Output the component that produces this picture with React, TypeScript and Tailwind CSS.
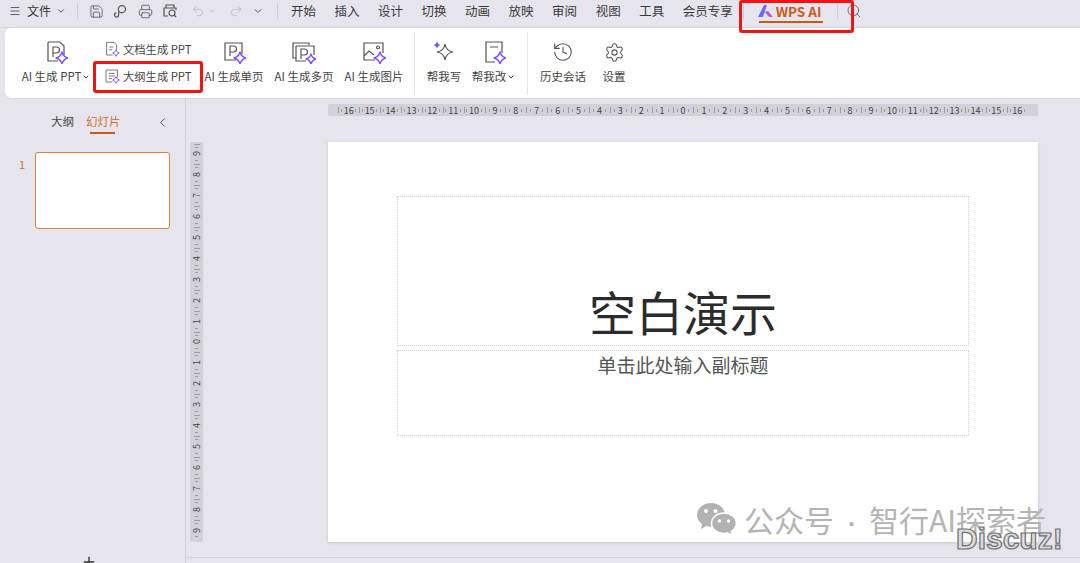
import { ChevronDown, ChevronLeft, History, Menu, Plus, Printer, Redo2, Save, Search, Settings, Undo2 } from "lucide-react";

const menus = ["开始", "插入", "设计", "切换", "动画", "放映", "审阅", "视图", "工具", "会员专享"];
const rulerNums = [16, 15, 14, 13, 12, 11, 10, 9, 8, 7, 6, 5, 4, 3, 2, 1, 0, 1, 2, 3, 4, 5, 6, 7, 8, 9, 10, 11, 12, 13, 14, 15, 16];
const sideNums = [9, 8, 7, 6, 5, 4, 3, 2, 1, 0, 1, 2, 3, 4, 5, 6, 7, 8, 9];

function Spark({ x, y, s = 6 }: { x: number; y: number; s?: number }) {
  return (
    <path
      d={`M${x} ${y - s}Q${x + s * 0.2} ${y - s * 0.2} ${x + s} ${y}Q${x + s * 0.2} ${y + s * 0.2} ${x} ${y + s}Q${x - s * 0.2} ${y + s * 0.2} ${x - s} ${y}Q${x - s * 0.2} ${y - s * 0.2} ${x} ${y - s}Z`}
      fill="#fff"
      stroke="#7c4dff"
      strokeWidth="1.3"
      strokeLinejoin="round"
    />
  );
}

function PLetter({ x = 7, y = 6 }: { x?: number; y?: number }) {
  return <path d={`M${x} ${y + 10}V${y}h3.500a3 3 0 0 1 0 6h-3.500`} fill="none" stroke="#555" strokeWidth="1.2" />;
}

function IconBox({ children, size = 24 }: { children: React.ReactNode; size?: number }) {
  return (
    <svg width={size} height={size} viewBox="0 0 24 24" fill="none" stroke="#555" strokeWidth="1.2">
      {children}
    </svg>
  );
}

function RibbonButton({ icon, label, width, caret }: { icon: React.ReactNode; label: string; width: string; caret?: boolean }) {
  return (
    <div className={`flex flex-col items-center shrink-0 ${width}`}>
      <div className="h-[24px] flex items-center justify-center">{icon}</div>
      <div className="mt-[5px] h-[16px] flex items-center whitespace-nowrap text-[11.5px] text-[#444]">
        {label}
        {caret && <ChevronDown size={8} strokeWidth={3} className="ml-[1px]" />}
      </div>
    </div>
  );
}

function Ruler() {
  return (
    <div className="ml-[142px] w-[710px] h-[12px] bg-[#d2d1d9] rounded-[2px] flex items-center justify-center">
      {rulerNums.map((n, i) => (
        <div key={i} className="w-[20.9px] shrink-0 flex items-center justify-between text-[9px] leading-none text-[#444]">
          <span className="w-px h-[6px] bg-[#9c9ca3]" />
          <span className="w-px h-[3px] bg-[#9c9ca3]" />
          <span>{n}</span>
          <span className="w-px h-[3px] bg-[#9c9ca3]" />
          <span className="w-px" />
        </div>
      ))}
    </div>
  );
}

function SideRuler() {
  return (
    <div className="ml-[4px] w-[13px] h-[400px] bg-[#d2d1d9] rounded-[2px] flex flex-col items-center justify-center">
      {sideNums.map((n, i) => (
        <div key={i} className="h-[20.9px] shrink-0 flex flex-col items-center justify-between text-[9px] leading-none text-[#444]">
          <span className="h-px w-[6px] bg-[#9c9ca3]" />
          <span className="h-px w-[3px] bg-[#9c9ca3]" />
          <span className="-rotate-90">{n}</span>
          <span className="h-px w-[3px] bg-[#9c9ca3]" />
          <span className="h-px" />
        </div>
      ))}
    </div>
  );
}

export default function App() {
  return (
    <div className="relative w-[1080px] h-[563px] overflow-hidden bg-[#e6e5ee] font-['Noto_Sans_CJK_SC','Noto_Sans',sans-serif] text-[#333]">
      {/* top menu */}
      <div className="h-[28px] pb-[5px] flex items-center border-b border-[#d6d5dd]">
        <Menu size={12} strokeWidth={1.5} className="ml-[9px]" />
        <span className="ml-[6px] text-[12px]">文件</span>
        <ChevronDown size={10} className="ml-[5px]" />
        <span className="ml-[11px] w-px h-[16px] bg-[#cfced6]" />
        <Save size={15} strokeWidth={1.3} className="ml-[11px] text-[#555]" />
        <svg width="15" height="15" viewBox="0 0 16 16" fill="none" stroke="#555" strokeWidth="1.3" className="ml-[9px]">
          <circle cx="9.5" cy="5.5" r="3.8" />
          <path d="M6 8v3.5a2.2 2.2 0 1 1-2.5-2" />
        </svg>
        <Printer size={15} strokeWidth={1.3} className="ml-[10px] text-[#555]" />
        <svg width="16" height="16" viewBox="0 0 16 16" fill="none" stroke="#555" strokeWidth="1.2" className="ml-[9px]">
          <path d="M4 5V2h8v3M6 13H2V5h12v2" />
          <circle cx="10" cy="10" r="3" />
          <path d="M12.2 12.2l2 2" />
        </svg>
        <Undo2 size={14} strokeWidth={1.3} className="ml-[13px] text-[#b5b5bb]" />
        <ChevronDown size={8} className="ml-[3px] text-[#b5b5bb]" />
        <Redo2 size={14} strokeWidth={1.3} className="ml-[13px] text-[#b5b5bb]" />
        <ChevronDown size={12} className="ml-[9px] text-[#555]" />
        <span className="ml-[13px] w-px h-[16px] bg-[#cfced6]" />
        <div className="ml-[13px] flex gap-[18.5px] text-[12.5px] text-[#3a3a3a]">
          {menus.map((m) => (
            <span key={m}>{m}</span>
          ))}
        </div>
        <span className="ml-[10px] w-px h-[16px] bg-[#cfced6]" />
        <div className="relative ml-[14px] w-[65px] flex items-center gap-[3px]">
          <svg width="15" height="12" viewBox="0 0 15 12" className="shrink-0">
            <defs>
              <linearGradient id="wps" x1="0" x2="1" y1="0" y2="0">
                <stop offset="0" stopColor="#4a7bff" />
                <stop offset="0.55" stopColor="#8a5cf6" />
                <stop offset="1" stopColor="#ff5c9a" />
              </linearGradient>
            </defs>
            <path d="M0 12 6 0h3L5 12zM7 7l3-1 5 6h-4z" fill="url(#wps)" />
          </svg>
          <span className="text-[13.5px] font-bold text-[#c85a1a] whitespace-nowrap">WPS AI</span>
          <span className="absolute left-[1px] right-0 top-[20px] h-[2px] bg-[#c85a1a]" />
        </div>
        <span className="ml-[14px] w-px h-[16px] bg-[#cfced6]" />
        <Search size={16} strokeWidth={1.2} className="ml-[8px] text-[#555]" />
      </div>

      {/* ribbon */}
      <div className="ml-[5px] h-[70px] bg-white rounded-l-[6px] flex items-start pt-[12px] shadow-[0_1px_1px_#d6d5dd]">
        <RibbonButton
          label="AI 生成 PPT"
          width="w-[78px] ml-[12px]"
          caret
          icon={
            <IconBox>
              <path d="M4 2h12l4 4v9M4 2v19h10" />
              <PLetter x={9} y={7} />
              <Spark x={18} y={18} />
            </IconBox>
          }
        />
        <div className="ml-[9px] -mt-[1px] w-[100px] shrink-0 flex flex-col text-[11.3px] text-[#444]">
          <div className="h-[20px] flex items-center gap-[3px] whitespace-nowrap">
            <IconBox size={16}>
              <path d="M4 2h11l4 4v7M4 2v19h9M8 9h6M8 13h4" />
              <Spark x={18} y={18} s={5} />
            </IconBox>
            文档生成 PPT
          </div>
          <div className="mt-[7px] h-[20px] flex items-center gap-[3px] whitespace-nowrap">
            <IconBox size={16}>
              <path d="M3 3h17v11M3 3v18h10M7 8h9M7 12h9M7 16h5" />
              <Spark x={18} y={18} s={5} />
            </IconBox>
            大纲生成 PPT
          </div>
        </div>
        <RibbonButton
          label="AI 生成单页"
          width="w-[60px]"
          icon={
            <IconBox>
              <path d="M20 14V3H3v17h11" />
              <PLetter x={8} y={6} />
              <Spark x={18} y={18} />
            </IconBox>
          }
        />
        <RibbonButton
          label="AI 生成多页"
          width="w-[60px] ml-[10px]"
          icon={
            <IconBox>
              <path d="M4 18H1V3h16v2M4 6h18v9M4 6v15h10" />
              <PLetter x={9} y={9} />
              <Spark x={19} y={19} s={5} />
            </IconBox>
          }
        />
        <RibbonButton
          label="AI 生成图片"
          width="w-[60px] ml-[10px]"
          icon={
            <IconBox>
              <path d="M21 13V3H2v17h11M2 16l5-5 5 4" />
              <circle cx="16" cy="7.5" r="1.5" />
              <Spark x={18} y={18} />
            </IconBox>
          }
        />
        <span className="ml-[10px] -mt-[8px] w-px h-[63px] bg-[#e4e4e8]" />
        <RibbonButton
          label="帮我写"
          width="w-[34px] ml-[12px]"
          icon={
            <IconBox>
              <path d="M13 4Q14 11 21 12Q14 13 13 20Q12 13 5 12Q12 11 13 4Z" />
              <path d="M5 1.5 6.3 4 8.500 5 6.300 6 5 8.500 3.700 6 1.500 5 3.700 4Z" fill="#7c4dff" stroke="none" />
            </IconBox>
          }
        />
        <RibbonButton
          label="帮我改"
          width="w-[43px] ml-[11px]"
          caret
          icon={
            <IconBox>
              <path d="M20 13V2H4v20h9M8 7h8" />
              <Spark x={18} y={18} />
            </IconBox>
          }
        />
        <span className="ml-[12px] -mt-[8px] w-px h-[63px] bg-[#e4e4e8]" />
        <RibbonButton
          label="历史会话"
          width="w-[46px] ml-[12px]"
          icon={<History size={22} strokeWidth={1.2} className="text-[#555]" />}
        />
        <RibbonButton
          label="设置"
          width="w-[24px] ml-[16px]"
          icon={<Settings size={21} strokeWidth={1.2} className="text-[#555]" />}
        />
      </div>

      {/* body */}
      <div className="flex h-[465px]">
        <div className="w-[186px] shrink-0 border-r border-[#d2d1d9] flex flex-col">
          <div className="mt-[15px] h-[18px] flex items-center text-[11.5px]">
            <span className="ml-[51px] text-[#444]">大纲</span>
            <span className="ml-[12px] text-[#d0702e]">幻灯片</span>
            <ChevronLeft size={15} strokeWidth={1.4} className="ml-[34px] text-[#444]" />
          </div>
          <div className="ml-[90px] mt-[1px] w-[25px] h-[2px] bg-[#c85a1a]" />
          <div className="mt-[18px] flex items-start">
            <span className="ml-[19px] mt-[4px] text-[11px] text-[#c9703a]">1</span>
            <div className="ml-[10px] w-[135px] h-[77px] bg-white border border-[#e0803f] rounded-[3px]" />
          </div>
          <Plus size={16} strokeWidth={2} className="mt-auto -mb-[7px] ml-[81px] text-[#333]" />
        </div>

        <div className="flex-1 flex flex-col">
          <div className="h-[459px]">
            <div className="pt-[6px]">
              <Ruler />
            </div>
            <div className="mt-[26px] flex">
              <SideRuler />
              <div className="ml-[125px] w-[710px] h-[400px] bg-white shadow-[0_1px_3px_#c4c3cc] flex flex-col items-center pt-[54px]">
                <div className="w-[572px] h-[150px] border border-dotted border-[#d2d2d2] flex items-end justify-center pb-[4px]">
                  <span className="text-[47px] leading-[60px] text-[#2b2b2b]">空白演示</span>
                </div>
                <div className="mt-[4px] w-[572px] h-[86px] border border-dotted border-[#d2d2d2] flex justify-center">
                  <span className="text-[19px] leading-[28px] text-[#555]">单击此处输入副标题</span>
                </div>
              </div>
            </div>
          </div>
          <div className="h-px bg-[#d2d1d9]" />
        </div>
      </div>

      {/* annotation boxes */}
      <div className="absolute left-[93px] top-[61px] w-[110px] h-[32px] border-[3px] border-[#f01414] rounded-[3px]" />
      <div className="absolute left-[739px] top-0 w-[115px] h-[33px] border-[3px] border-[#f01414] rounded-[3px]" />

      {/* watermarks */}
      <svg width="42" height="34" viewBox="0 0 42 34" className="absolute left-[696px] top-[502px]">
        <path d="M15 1C7 1 1 6.500 1 13c0 3.800 2 7 5 9l-1 5 5.500-3c1.500.5 3 .7 4.500.7C23 24.700 29 19.500 29 13S23 1 15 1Z" fill="#b2b2b2" />
        <path d="M28 11c-7 0-12.500 4.600-12.500 10.300S21 31.600 28 31.600c1.300 0 2.600-.2 3.800-.5l4.600 2.500-1-4.200c3-1.900 4.900-4.800 4.900-8.100C40.300 15.600 35 11 28 11Z" fill="#b2b2b2" stroke="#fff" strokeWidth="1.500" />
        <circle cx="10" cy="9" r="2" fill="#fff" />
        <circle cx="19.500" cy="9" r="2" fill="#fff" />
        <circle cx="23.500" cy="19" r="1.700" fill="#fff" />
        <circle cx="32.500" cy="19" r="1.700" fill="#fff" />
      </svg>
      <div className="absolute left-[744px] top-[497px] text-[30px] leading-[44px] whitespace-nowrap text-[#b4b4b4]">
        公众号<span className="inline-block w-[35px] text-center text-[20px]">·</span>智行AI探索者
      </div>
      <div className="absolute left-[956px] top-[520px] text-[30px] leading-[38px] font-bold whitespace-nowrap font-['Liberation_Sans',sans-serif] text-[#dcdcdc] [-webkit-text-stroke:1.2px_#6f6f6f]">Discuz!</div>
    </div>
  );
}
